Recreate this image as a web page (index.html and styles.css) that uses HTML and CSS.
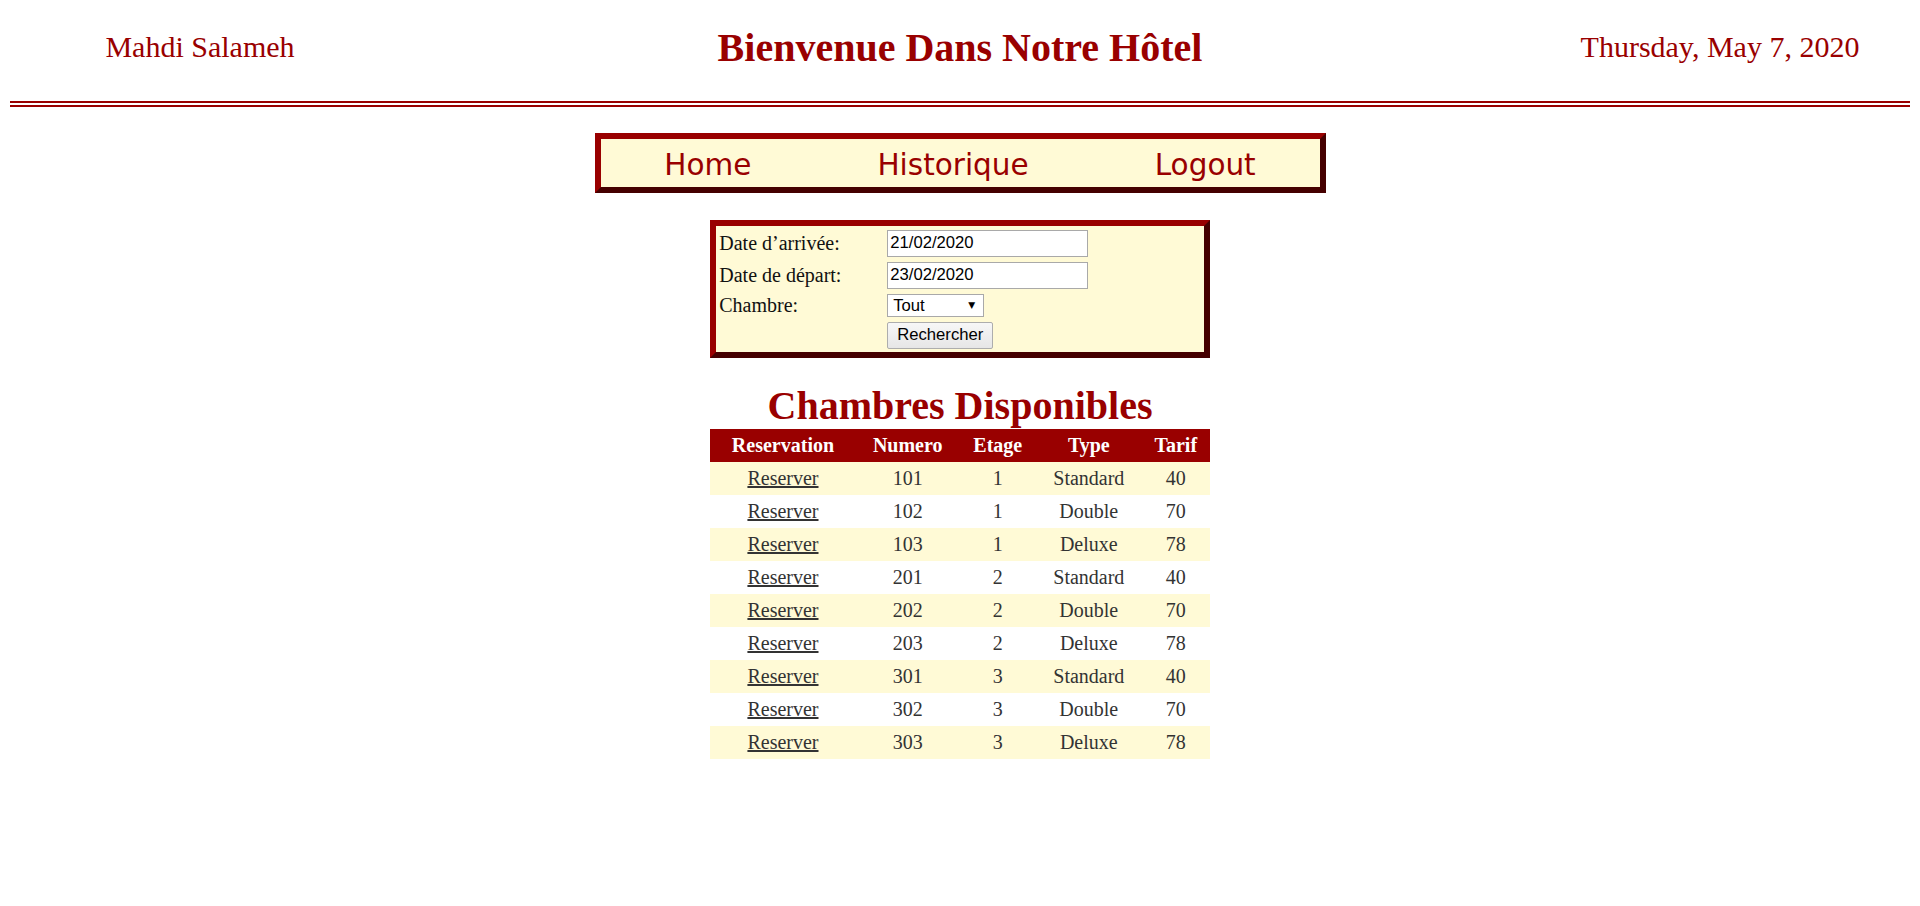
FILE: index.html
```html
<!DOCTYPE html>
<html lang="fr">
<head>
<meta charset="utf-8">
<title>Bienvenue Dans Notre Hôtel</title>
<link rel="stylesheet" href="styles.css">
</head>
<body>
<header class="site-header">
  <div class="user-name">Mahdi Salameh</div>
  <h1 class="site-title">Bienvenue Dans Notre Hôtel</h1>
  <div class="today">Thursday, May 7, 2020</div>
</header>

<nav class="main-nav">
  <a href="#" class="nav-link">Home</a>
  <a href="#" class="nav-link">Historique</a>
  <a href="#" class="nav-link">Logout</a>
</nav>

<form class="search-box">
  <table class="search-table">
    <tr>
      <td class="label-cell">Date d’arrivée:</td>
      <td><input class="text-input" type="text" value="21/02/2020"></td>
    </tr>
    <tr>
      <td class="label-cell">Date de départ:</td>
      <td><input class="text-input" type="text" value="23/02/2020"></td>
    </tr>
    <tr>
      <td class="label-cell">Chambre:</td>
      <td>
        <div class="select-wrap">
          <select class="room-select">
            <option>Tout</option>
            <option>Standard</option>
            <option>Double</option>
            <option>Deluxe</option>
          </select>
        </div>
      </td>
    </tr>
    <tr>
      <td class="label-cell"></td>
      <td><button type="button" class="search-btn">Rechercher</button></td>
    </tr>
  </table>
</form>

<h2 class="section-title">Chambres Disponibles</h2>
<table class="rooms">
  <thead>
    <tr><th>Reservation</th><th>Numero</th><th>Etage</th><th>Type</th><th>Tarif</th></tr>
  </thead>
  <tbody>
    <tr><td><a href="#">Reserver</a></td><td>101</td><td>1</td><td>Standard</td><td>40</td></tr>
    <tr><td><a href="#">Reserver</a></td><td>102</td><td>1</td><td>Double</td><td>70</td></tr>
    <tr><td><a href="#">Reserver</a></td><td>103</td><td>1</td><td>Deluxe</td><td>78</td></tr>
    <tr><td><a href="#">Reserver</a></td><td>201</td><td>2</td><td>Standard</td><td>40</td></tr>
    <tr><td><a href="#">Reserver</a></td><td>202</td><td>2</td><td>Double</td><td>70</td></tr>
    <tr><td><a href="#">Reserver</a></td><td>203</td><td>2</td><td>Deluxe</td><td>78</td></tr>
    <tr><td><a href="#">Reserver</a></td><td>301</td><td>3</td><td>Standard</td><td>40</td></tr>
    <tr><td><a href="#">Reserver</a></td><td>302</td><td>3</td><td>Double</td><td>70</td></tr>
    <tr><td><a href="#">Reserver</a></td><td>303</td><td>3</td><td>Deluxe</td><td>78</td></tr>
  </tbody>
</table>
</body>
</html>
```

FILE: styles.css
```css
html {
  background: #fff;
}

body {
  margin: 10px;
  font-family: "Liberation Serif", "Times New Roman", serif;
  font-size: 20px;
  color: #000;
  background: #fff;
}

/* ---------- header ---------- */
.site-header {
  display: grid;
  grid-template-columns: 1fr 3fr 1fr;
  align-items: center;
  height: 74px;
  padding-bottom: 17px;
  border-bottom: 6px double #990000;
  color: #990000;
}

.user-name,
.today {
  font-size: 30px;
  text-align: center;
}

.site-title {
  margin: 0;
  font-size: 40px;
  font-weight: bold;
  text-align: center;
}

/* ---------- navigation ---------- */
.main-nav {
  width: 719px;
  height: 48px;
  margin: 26px auto 0;
  display: flex;
  justify-content: center;
  align-items: center;
  gap: 126px;
  background: #fffad6;
  border: 6px solid;
  border-color: #990000 #450000 #450000 #990000;
}

.nav-link {
  padding-top: 4px;
  font-family: "DejaVu Sans", Verdana, sans-serif;
  font-size: 29.5px;
  color: #990000;
  text-decoration: none;
}

/* ---------- search form ---------- */
.search-box {
  width: 488px;
  margin: 27px auto 0;
  background: #fffad6;
  border: 6px solid;
  border-color: #990000 #450000 #450000 #990000;
}

.search-table {
  border-spacing: 2.5px;
}

.search-table td {
  padding: 1.5px 1.25px;
}

.label-cell {
  width: 163.5px;
  color: #111;
}

.text-input {
  display: block;
  box-sizing: border-box;
  width: 201px;
  height: 27px;
  margin: 0;
  padding: 1px 2px;
  border: 1px solid #a9a9a9;
  background: #fff;
  font-family: "Liberation Sans", Arial, sans-serif;
  font-size: 16.67px;
  color: #000;
}

.select-wrap {
  position: relative;
  width: 97px;
}

.select-wrap::after {
  content: "\25BC";
  position: absolute;
  right: 9px;
  top: 6px;
  font-family: "DejaVu Sans", sans-serif;
  font-size: 9px;
  line-height: 11px;
  color: #000;
  pointer-events: none;
}

.room-select {
  display: block;
  box-sizing: border-box;
  width: 97px;
  height: 23px;
  margin: 0;
  padding: 0 0 0 5px;
  border: 1px solid #a9a9a9;
  border-radius: 0;
  background: #fff;
  -webkit-appearance: none;
  appearance: none;
  font-family: "Liberation Sans", Arial, sans-serif;
  font-size: 16.67px;
  color: #000;
}

.search-btn {
  display: block;
  box-sizing: border-box;
  width: 106px;
  height: 27px;
  margin: 0;
  padding: 0;
  border: 1px solid #adadad;
  border-radius: 2px;
  background: linear-gradient(#f7f7f7, #e6e6e6);
  font-family: "Liberation Sans", Arial, sans-serif;
  font-size: 16.67px;
  color: #000;
}

/* ---------- rooms table ---------- */
.section-title {
  margin: 24px 0 0;
  font-size: 40px;
  font-weight: bold;
  text-align: center;
  color: #990000;
}

.rooms {
  width: 500px;
  margin: 0 auto;
  border-collapse: collapse;
}

.rooms th,
.rooms td {
  padding: 5px;
  text-align: center;
}

.rooms th {
  background: #990000;
  color: #fff;
  font-weight: bold;
}

.rooms td {
  color: #333;
}

.rooms tbody tr:nth-child(odd) {
  background: #fffad6;
}

.rooms a {
  color: #333;
  text-decoration: underline;
}
```
